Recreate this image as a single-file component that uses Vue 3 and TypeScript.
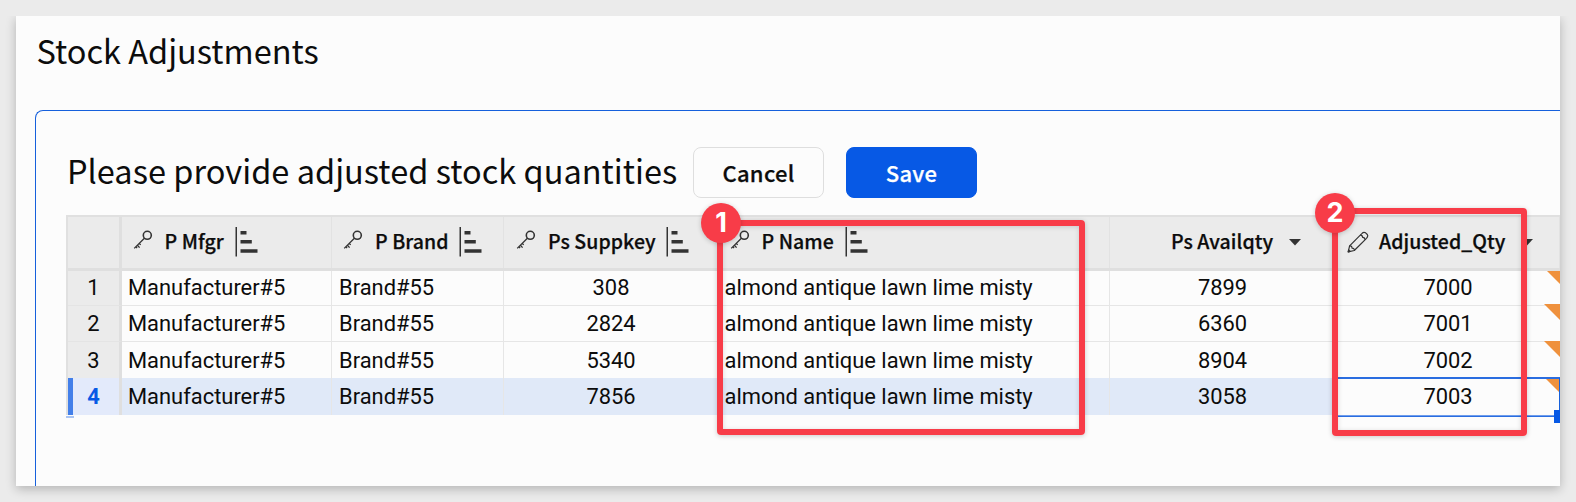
<script setup lang="ts">
interface Column {
  key: string
  label: string
  icon?: 'key' | 'pencil'
  tail: 'sort' | 'caret'
}

interface StockRow {
  mfgr: string
  brand: string
  suppkey: number
  name: string
  avail: number
  adjusted: number
}

const columns: Column[] = [
  { key: 'mfgr', label: 'P Mfgr', icon: 'key', tail: 'sort' },
  { key: 'brand', label: 'P Brand', icon: 'key', tail: 'sort' },
  { key: 'suppkey', label: 'Ps Suppkey', icon: 'key', tail: 'sort' },
  { key: 'name', label: 'P Name', icon: 'key', tail: 'sort' },
  { key: 'avail', label: 'Ps Availqty', tail: 'caret' },
  { key: 'adjusted', label: 'Adjusted_Qty', icon: 'pencil', tail: 'caret' },
]

const rows: StockRow[] = [
  { suppkey: 308, avail: 7899, adjusted: 7000 },
  { suppkey: 2824, avail: 6360, adjusted: 7001 },
  { suppkey: 5340, avail: 8904, adjusted: 7002 },
  { suppkey: 7856, avail: 3058, adjusted: 7003 },
].map((r) => ({
  mfgr: 'Manufacturer#5',
  brand: 'Brand#55',
  name: 'almond antique lawn lime misty',
  ...r,
}))

const selected = 3
</script>

<template>
  <div class="stage">
    <main class="card">
      <h1 class="title">Stock Adjustments</h1>
      <section class="panel">
        <div class="toolbar">
          <h2 class="prompt">Please provide adjusted stock quantities</h2>
          <button class="btn cancel">Cancel</button>
          <button class="btn save">Save</button>
        </div>

        <div class="table">
          <div class="row head">
            <div class="num"></div>
            <div v-for="c in columns" :key="c.key" class="cell" :class="c.key">
              <svg v-if="c.icon === 'key'" class="key" width="20" height="20" viewBox="0 0 20 20">
                <g fill="none" stroke="#333" stroke-width="1.3">
                  <circle cx="14.3" cy="5.3" r="4" stroke-width="1.6" />
                  <path d="M11.4 8.2 1.2 18.4M4.4 15.2l2.2 2.4M2.9 16.7l1.2 1.5M6.2 13.4l1.5 1.5" />
                </g>
              </svg>
              <svg v-if="c.icon === 'pencil'" class="pencil" width="22" height="22" viewBox="0 0 22 22">
                <g fill="none" stroke="#333" stroke-width="1.2" stroke-linejoin="round">
                  <path d="M1.2 20.8 2.6 14.8 14.8 2.6Q16.6 .6 18.6 1.8L20.3 3.5Q21.4 5.3 19.5 7.3L7.3 19.5Z" />
                  <path d="M2.600 14.800Q5 14.600 5 17.100 7.400 17.100 7.300 19.500M13.300 4.100Q15.600 4.200 15.700 6.400 17.900 6.500 18 8.800M1.200 20.800l.5-2 1.500 1.500z" />
                </g>
              </svg>
              <span class="label">{{ c.label }}</span>
              <svg v-if="c.tail === 'sort'" class="sort" width="23" height="30" viewBox="0 0 23 30">
                <path fill="#333" d="M.5 0h1.500v29.500H.5zM5.500 4h6v3.600h-6zM5.500 13h11.300v3.600H5.500zM5.500 22.200h17v3.600h-17z" />
              </svg>
              <svg v-else class="caret" width="12" height="7" viewBox="0 0 12 7">
                <path fill="#333" d="M0 0h12L6 6.500z" />
              </svg>
            </div>
          </div>
          <div v-for="(r, i) in rows" :key="i" class="row body" :class="[`r${i + 1}`, { selected: i === selected }]">
            <div class="num">{{ i + 1 }}</div>
            <div class="cell mfgr">{{ r.mfgr }}</div>
            <div class="cell brand">{{ r.brand }}</div>
            <div class="cell suppkey">{{ r.suppkey }}</div>
            <div class="cell name">{{ r.name }}</div>
            <div class="cell avail">{{ r.avail }}</div>
            <div class="cell adjusted">
              {{ r.adjusted }}
              <i class="flag"></i>
              <i v-if="i === selected" class="handle"></i>
            </div>
          </div>
        </div>
        <div class="underline"></div>
      </section>
    </main>

    <div class="callout first"><b class="badge">1</b></div>
    <div class="callout second"><b class="badge">2</b></div>
  </div>
</template>

<style>
body {
  margin: 0;
  background: #ebebeb;
}
</style>

<style scoped>
.stage {
  position: relative;
  box-sizing: border-box;
  width: 1576px;
  height: 502px;
  padding: 16px;
  overflow: hidden;
  background: #ebebeb;
  color: #0c0c0c;
  font-family: 'Noto Sans CJK SC', 'Noto Sans', sans-serif;
}
.stage * {
  box-sizing: border-box;
}
.card {
  width: 1544px;
  height: 470px;
  background: #fcfcfc;
  box-shadow: 0 3px 10px rgba(0, 0, 0, 0.24);
  clip-path: inset(0 -16px -16px -16px);
}
.title,
.prompt {
  margin: 0;
  font-size: 32.5px;
  font-weight: 400;
  line-height: 48px;
  white-space: nowrap;
}
.title {
  padding: 10px 0 0 20.5px;
  height: 94px;
}
.panel {
  margin-left: 19px;
  height: 376px;
  padding: 36px 0 0 30px;
  border: solid #1660dc;
  border-width: 1px 0 0 1px;
  border-radius: 8px 0 0 0;
  overflow: hidden;
}
.toolbar {
  display: flex;
  height: 68px;
}
.prompt {
  width: 627px;
  padding-left: 1px;
  line-height: 46px;
  letter-spacing: 0.02px;
}
.btn {
  width: 131px;
  height: 51px;
  padding: 0 0 1px;
  border: 1px solid #dedede;
  border-radius: 8px;
  background: #fcfcfc;
  color: #0c0c0c;
  font: 500 22px/48px 'Noto Sans CJK SC', sans-serif;
  letter-spacing: 0.3px;
  -webkit-text-stroke: 0.25px currentColor;
}
.save {
  margin-left: 22px;
  border-color: #0759e5;
  background: #0759e5;
  color: #fff;
}
.table {
  width: 1494px;
  border: solid #e0e0e0;
  border-width: 2px 0 2px 2px;
}
.row {
  display: grid;
  grid-template-columns: 54px 210px 172px 215px 391px 226px 224px;
}
.head {
  height: 54px;
  background: #ebebeb;
  border-bottom: 3px solid #dfdfdf;
  font-size: 19.5px;
  font-weight: 500;
}
.head .cell {
  display: flex;
  align-items: center;
  border-right: 1px solid #e2e2e2;
  padding: 0 0 2px 11px;
  white-space: nowrap;
}
.num {
  border-right: 3px solid #dfdfdf;
  background: #ebebeb;
}
.label {
  margin-top: -2px;
  line-height: 30px;
  letter-spacing: 0.06px;
  -webkit-text-stroke: 0.25px currentColor;
}
.key {
  margin: -4px 12px 0 0;
}
.head .mfgr,
.head .name {
  padding-left: 10.5px;
}
.head .suppkey {
  padding-left: 12px;
}
.sort {
  margin-left: 11px;
}
.head .brand .sort,
.head .suppkey .sort {
  margin-left: 10px;
}
.caret {
  margin: 2px 0 0 15.5px;
}
.head .avail {
  padding-left: 61px;
}
.pencil {
  margin: 1px 10px 0 0;
}
.body {
  height: 36px;
  font: 21.9px/35px Roboto, sans-serif;
}
.r1 {
  height: 35px;
  line-height: 33px;
}
.r3 {
  line-height: 37px;
}
.r4 {
  height: 35px;
  line-height: 37px;
}
.body .cell {
  border-right: 1px solid #e6e6e6;
  border-bottom: 1px solid #e6e6e6;
  white-space: nowrap;
  padding-left: 6px;
}
.body .num {
  text-align: center;
  border-bottom: 1px solid #e4e4e4;
}
.body .brand {
  padding-left: 7px;
}
.body .name {
  padding-left: 5.5px;
}
.body .suppkey,
.body .avail,
.body .adjusted {
  padding: 0;
  text-align: center;
}
.body .adjusted {
  position: relative;
  border-right: 0;
}
.flag {
  position: absolute;
  top: -2px;
  right: 0;
  width: 16px;
  height: 16px;
  background: #ef913d;
  clip-path: polygon(0 0, 100% 0, 100% 100%);
}
.r1 .flag {
  top: 0;
  width: 13px;
  height: 13px;
}
.r3 .flag {
  top: -1px;
}
.r4 .flag {
  top: 1px;
  right: 1px;
  width: 13px;
  height: 13px;
}
.body.selected .cell,
.body.selected .num {
  border-bottom: 0;
}
.selected .cell {
  background: #e0e9f8;
}
.selected .num {
  background: #e3eafb;
  box-shadow: inset 5px 0 #437fe9;
  color: #0759e5;
  font-weight: 700;
}
.selected .adjusted {
  background: #fcfcfc;
  box-shadow: inset -1px 0 #1660dc, 0 -1px #2a6de0, inset 0 1px #2a6de0, 0 1px #6f9dec, 0 2px #2a6de0;
}
.handle {
  position: absolute;
  right: 0;
  bottom: -8px;
  width: 6px;
  height: 13px;
  background: #0759e5;
}
.underline {
  width: 8px;
  height: 2px;
  margin-top: 1px;
  background: #a9c4f3;
}
.callout {
  position: absolute;
  border: 6px solid #f83c48;
  border-radius: 4px;
  box-shadow: 0 1px 5px rgba(0, 0, 0, 0.2), inset 0 1px 5px rgba(0, 0, 0, 0.15);
}
.first {
  left: 717px;
  top: 220px;
  width: 368px;
  height: 215px;
}
.second {
  left: 1332px;
  top: 208px;
  width: 195px;
  height: 228px;
}
.badge {
  position: absolute;
  left: -22px;
  top: -23px;
  width: 40px;
  height: 40px;
  border-radius: 50%;
  background: #f83c48;
  color: #fff;
  font: 700 27px/40px Inter, sans-serif;
  text-align: center;
  box-shadow: 0 1px 5px rgba(0, 0, 0, 0.2);
}
.second .badge {
  left: -23px;
  top: -21px;
}
</style>
